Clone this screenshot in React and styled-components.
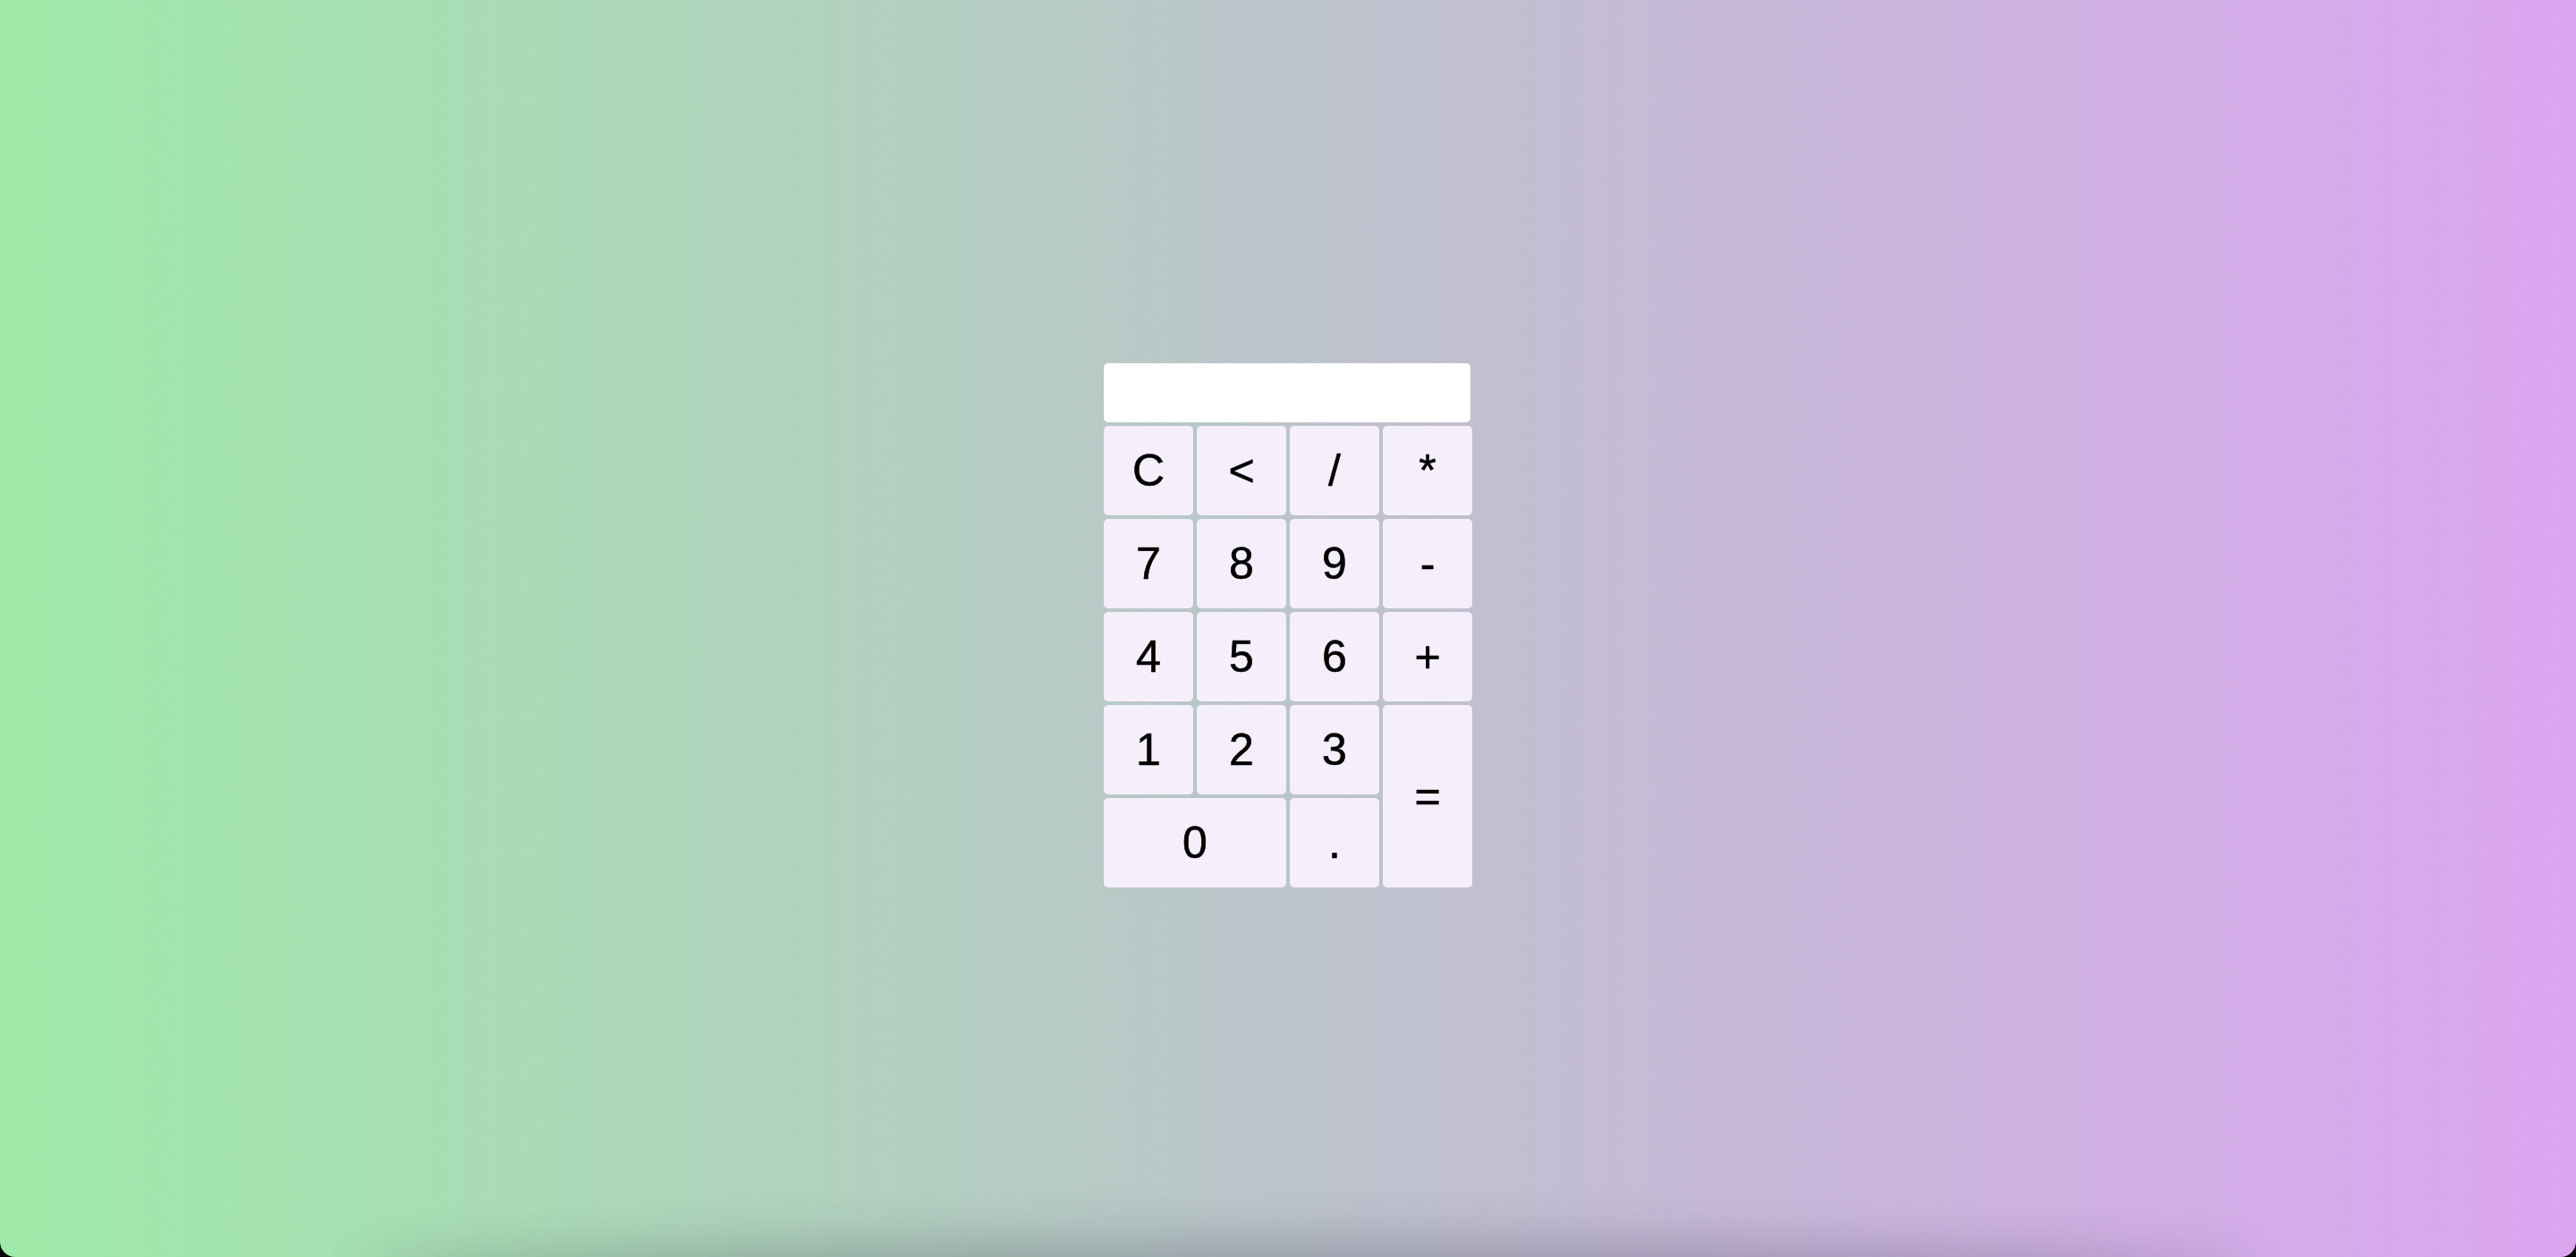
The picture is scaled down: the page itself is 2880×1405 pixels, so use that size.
import React, { useState } from "react";
import styled, { createGlobalStyle } from "styled-components";

const GlobalStyle = createGlobalStyle`
  html, body {
    margin: 0;
    padding: 0;
    background: #000;
  }
  body {
    font-family: "Liberation Sans", Arial, sans-serif;
  }
`;

const Page = styled.div`
  position: relative;
  height: 1405px;
  overflow: hidden;
  display: flex;
  align-items: center;
  justify-content: center;
  background: linear-gradient(to right, #9eeaa8 0%, #bcc4cb 50%, #dca5f1 100%);
  border-radius: 0 0 17px 17px;

  &::after {
    content: "";
    position: absolute;
    left: 420px;
    right: 380px;
    bottom: -46px;
    height: 46px;
    border-radius: 50%;
    box-shadow: 0 0 60px 14px rgba(40, 40, 60, 0.28);
    pointer-events: none;
  }
`;

const Calculator = styled.div`
  display: flex;
  flex-direction: column;
  gap: 4px;
  margin-bottom: 7px;
`;

const Display = styled.input`
  width: 410px;
  height: 66px;
  box-sizing: border-box;
  border: none;
  border-radius: 5px;
  background: #fff;
  outline: none;
  padding: 0 12px;
  text-align: right;
  font-family: "Liberation Sans", Arial, sans-serif;
  font-size: 40px;
`;

const Keypad = styled.div`
  display: grid;
  grid-template-columns: repeat(4, 100px);
  grid-auto-rows: 100px;
  gap: 4px;
`;

const Key = styled.button`
  grid-column: span ${(p) => p.$wide || 1};
  grid-row: span ${(p) => p.$tall || 1};
  border: none;
  border-radius: 5px;
  background: #f5eefb;
  color: #000;
  font-family: "Liberation Sans", Arial, sans-serif;
  font-size: 50px;
  -webkit-text-stroke: 0.6px #000;
  cursor: pointer;
  padding: 0;
`;

const keys = [
  { k: "C" }, { k: "<" }, { k: "/" }, { k: "*" },
  { k: "7" }, { k: "8" }, { k: "9" }, { k: "-" },
  { k: "4" }, { k: "5" }, { k: "6" }, { k: "+" },
  { k: "1" }, { k: "2" }, { k: "3" }, { k: "=", tall: 2 },
  { k: "0", wide: 2 }, { k: "." },
];

export default function App() {
  const [value, setValue] = useState("");

  const press = (k) => {
    if (k === "C") return setValue("");
    if (k === "<") return setValue((v) => v.slice(0, -1));
    if (k === "=") {
      try {
        // eslint-disable-next-line no-new-func
        setValue(String(Function(`return (${value})`)()));
      } catch (e) {
        setValue("");
      }
      return;
    }
    setValue((v) => v + k);
  };

  return (
    <>
      <GlobalStyle />
      <Page>
        <Calculator>
          <Display value={value} readOnly />
          <Keypad>
            {keys.map((b) => (
              <Key key={b.k} $wide={b.wide} $tall={b.tall} onClick={() => press(b.k)}>
                {b.k}
              </Key>
            ))}
          </Keypad>
        </Calculator>
      </Page>
    </>
  );
}
